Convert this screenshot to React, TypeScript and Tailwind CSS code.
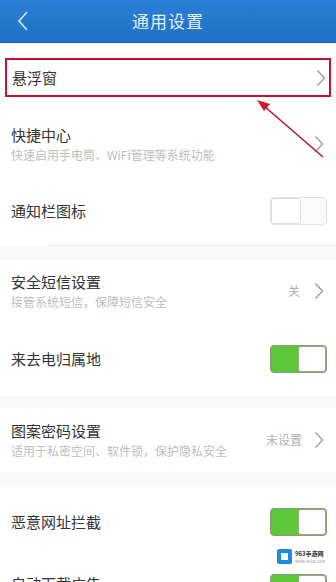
import React from "react";

const font = { fontFamily: '"Noto Sans CJK SC", "Noto Sans", sans-serif' };

function Chevron() {
  return (
    <svg width="10" height="18" viewBox="0 0 10 18" className="shrink-0">
      <polyline points="1.5,1.5 8.5,9 1.5,16.5" fill="none" stroke="#9a9a9a" strokeWidth="1.3" />
    </svg>
  );
}

function Toggle({ on }: { on: boolean }) {
  if (on) {
    return (
      <div className="flex h-[28px] w-[57px] overflow-hidden rounded-[4px] border border-[#8a9a78] bg-[#5cc738]">
        <div className="w-[27px]" />
        <div className="flex-1 rounded-[3px] border border-[#9aa88a] bg-white" />
      </div>
    );
  }
  return (
    <div className="flex h-[28px] w-[57px] overflow-hidden rounded-[4px] border border-[#e2e2e2] bg-[#fafafa]">
      <div className="w-[30px] rounded-[3px] border border-[#dedede] bg-white" />
      <div className="flex-1" />
    </div>
  );
}

function Title({ children }: { children: React.ReactNode }) {
  return <div className="text-[15px] leading-[20px] text-[#333333]">{children}</div>;
}

function Sub({ children }: { children: React.ReactNode }) {
  return <div className="mt-[2px] text-[12px] leading-[16px] text-[#bdbdbd]">{children}</div>;
}

function Band({ h }: { h: string }) {
  return <div className={`${h} bg-[#f8f8f8]`} />;
}

export default function App() {
  return (
    <div className="relative h-[582px] w-[336px] overflow-hidden bg-white" style={font}>
      {/* Header */}
      <div className="relative flex h-[43px] items-center justify-center border-b border-[#1b62b0] bg-gradient-to-b from-[#2a80d6] to-[#1f70c6]">
        <svg width="14" height="22" viewBox="0 0 14 22" className="absolute left-[16px] top-[10px]">
          <polyline points="11,2 3,11 11,20" fill="none" stroke="#dbe9ff" strokeWidth="1.6" />
        </svg>
        <div className="text-[17px] tracking-[1px] text-[#e4efff]">通用设置</div>
      </div>

      {/* Row 1 with red box */}
      <div className="px-[5px] pt-[15px]">
        <div className="flex h-[39px] items-center justify-between border-2 border-[#c8102e] pl-[5px] pr-[3px]">
          <Title>悬浮窗</Title>
          <Chevron />
        </div>
      </div>

      {/* Row 2 */}
      <div className="flex h-[86px] items-center justify-between pl-[11px] pr-[12px] pt-[8px]">
        <div>
          <Title>快捷中心</Title>
          <Sub>快速启用手电筒、WiFi管理等系统功能</Sub>
        </div>
        <Chevron />
      </div>

      {/* Row 3 */}
      <div className="flex h-[62px] items-center justify-between pl-[11px] pr-[9px] pb-[6px]">
        <Title>通知栏图标</Title>
        <Toggle on={false} />
      </div>

      <div className="ml-[48px] h-px bg-[#e6e6e6]" />
      <Band h="h-[14px]" />

      {/* Row 4 */}
      <div className="flex h-[62px] items-center justify-between pl-[11px] pr-[12px]">
        <div>
          <Title>安全短信设置</Title>
          <Sub>接管系统短信，保障短信安全</Sub>
        </div>
        <div className="flex items-center gap-[14px]">
          <span className="text-[12px] text-[#b0b0b0]">关</span>
          <Chevron />
        </div>
      </div>

      {/* Row 5 */}
      <div className="flex h-[74px] items-center justify-between pl-[11px] pr-[9px]">
        <Title>来去电归属地</Title>
        <Toggle on={true} />
      </div>

      <Band h="h-[12px]" />

      {/* Row 6 */}
      <div className="flex h-[64px] items-center justify-between pl-[11px] pr-[12px]">
        <div>
          <Title>图案密码设置</Title>
          <Sub>适用于私密空间、软件锁，保护隐私安全</Sub>
        </div>
        <div className="flex items-center gap-[12px]">
          <span className="text-[12px] text-[#b0b0b0]">未设置</span>
          <Chevron />
        </div>
      </div>

      <Band h="h-[14px]" />

      {/* Row 7 */}
      <div className="flex h-[72px] items-center justify-between pl-[11px] pr-[9px]">
        <Title>恶意网址拦截</Title>
        <Toggle on={true} />
      </div>

      {/* Row 8 (partially visible) */}
      <div className="flex h-[64px] items-start justify-between pl-[11px] pr-[9px] pt-[16px]">
        <Title>自动下载广告</Title>
        <Toggle on={true} />
      </div>

      {/* Watermark */}
      <div className="absolute left-[277px] top-[549px] flex items-center gap-[3px]">
        <div className="flex h-[15px] w-[15px] items-center justify-center rounded-[2px] bg-[#1e88e5]">
          <div className="h-[7px] w-[7px] bg-white" />
        </div>
        <div className="flex flex-col gap-[2px]">
          <div className="text-[6px] font-bold leading-[7px] text-[#333]">963手游网</div>
          <div className="text-[4px] leading-[5px] text-[#999]">www.963ss.com</div>
        </div>
      </div>

      {/* Red arrow */}
      <svg className="absolute left-0 top-0" width="336" height="582" viewBox="0 0 336 582">
        <line x1="323" y1="157" x2="264" y2="106" stroke="#b5172c" strokeWidth="1.6" />
        <polygon points="257,100 270,104 264,111" fill="#d0162c" />
      </svg>
    </div>
  );
}
